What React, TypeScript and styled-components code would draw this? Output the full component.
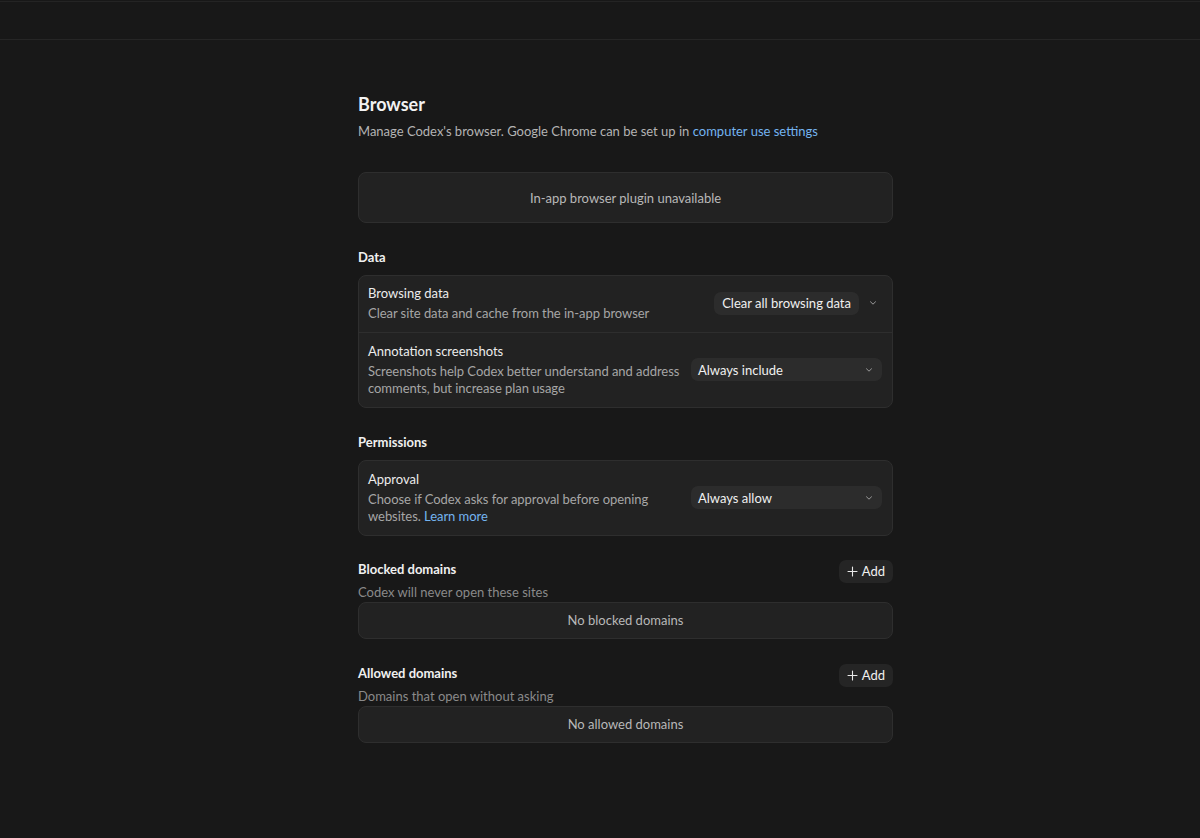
import React from "react";
import styled, { createGlobalStyle } from "styled-components";

const Global = createGlobalStyle`
  html, body { margin: 0; padding: 0; background: #181818; }
  body { font-family: "Segoe UI", Lato, "Open Sans", sans-serif; color: #e8e8e8; }
  * { box-sizing: border-box; }
`;

const Page = styled.div`
  min-height: 838px;
  background: #181818;
  display: flex;
  flex-direction: column;
`;

const TopBar = styled.div`
  height: 39px;
  margin-top: 1px;
  border-top: 1px solid #242424;
  border-bottom: 1px solid #262626;
`;

const Body = styled.div`
  display: flex;
  justify-content: center;
  padding-left: 51px;
`;

const Column = styled.main`
  width: 535px;
  padding-top: 52px;
  display: flex;
  flex-direction: column;
`;

const Title = styled.h1`
  margin: 0;
  font-size: 18px;
  font-weight: 700;
  line-height: 24px;
  color: #f2f2f2;
`;

const Subtitle = styled.p`
  margin: 6px 0 0;
  font-size: 13px;
  line-height: 18px;
  color: #b4b4b4;
`;

const Link = styled.a`
  color: #74b4f0;
  text-decoration: none;
`;

const Notice = styled.div<{ $h: number }>`
  height: ${(p) => p.$h}px;
  border: 1px solid #2e2e2e;
  border-radius: 8px;
  background: #222222;
  display: flex;
  align-items: center;
  justify-content: center;
  font-size: 13px;
  color: #b8b8b8;
`;

const Section = styled.section<{ $top: number }>`
  margin-top: ${(p) => p.$top}px;
  display: flex;
  flex-direction: column;
`;

const SectionTitle = styled.h2`
  margin: 0 0 9px;
  font-size: 13px;
  font-weight: 700;
  line-height: 18px;
  color: #f0f0f0;
`;

const Card = styled.div`
  border: 1px solid #2e2e2e;
  border-radius: 8px;
  background: #222222;
  display: flex;
  flex-direction: column;
`;

const Row = styled.div<{ $tight?: boolean }>`
  display: flex;
  align-items: center;
  justify-content: space-between;
  gap: 8px;
  padding: ${(p) => (p.$tight ? "8px" : "9px")} 10px 9px 9px;
  & + & { border-top: 1px solid #2e2e2e; }
`;

const RowText = styled.div`
  flex: 1;
  min-width: 0;
  display: flex;
  flex-direction: column;
  gap: 3px;
`;

const RowLabel = styled.div`
  font-size: 13px;
  line-height: 18px;
  color: #ececec;
`;

const RowDesc = styled.div`
  font-size: 13px;
  line-height: 17.5px;
  letter-spacing: -0.05px;
  color: #a6a6a6;
`;

const ActionWrap = styled.div`
  display: flex;
  align-items: center;
  gap: 9px;
  margin-right: 4px;
  flex-shrink: 0;
`;

const Pill = styled.button`
  height: 23px;
  padding: 0 8px;
  border: none;
  border-radius: 7px;
  background: #2c2c2c;
  color: #f0f0f0;
  font: inherit;
  font-size: 13px;
  display: flex;
  align-items: center;
`;

const Select = styled.button`
  flex-shrink: 0;
  width: 191px;
  height: 23px;
  padding: 0 8px 0 7px;
  border: none;
  border-radius: 7px;
  background: #2c2c2c;
  color: #f0f0f0;
  font: inherit;
  font-size: 13px;
  display: flex;
  align-items: center;
  justify-content: space-between;
`;

const Chevron = () => (
  <svg width="10" height="10" viewBox="0 0 10 10" fill="none">
    <path d="M2.5 3.8 L5 6.2 L7.5 3.8" stroke="#9a9a9a" strokeWidth="1" strokeLinecap="round" strokeLinejoin="round" />
  </svg>
);

const HeaderRow = styled.div`
  display: flex;
  align-items: flex-start;
  justify-content: space-between;
`;

const HeaderTitle = styled.h2`
  margin: 0;
  font-size: 13px;
  font-weight: 700;
  line-height: 18px;
  color: #f0f0f0;
`;

const AddButton = styled.button`
  height: 23px;
  padding: 0 8px 0 8px;
  border: none;
  border-radius: 7px;
  background: #252525;
  color: #f0f0f0;
  font: inherit;
  font-size: 13px;
  display: flex;
  align-items: center;
  gap: 4px;
`;

const MutedSub = styled.div`
  margin: 0 0 1px;
  font-size: 13px;
  line-height: 18px;
  color: #8a8a8a;
`;

const Plus = () => (
  <svg width="11" height="11" viewBox="0 0 11 11" fill="none">
    <path d="M5.5 1v9M1 5.5h9" stroke="#e8e8e8" strokeWidth="1.1" strokeLinecap="round" />
  </svg>
);

const DomainList = ({ title, sub, empty, top }: { title: string; sub: string; empty: string; top: number }) => (
  <Section $top={top}>
    <HeaderRow>
      <HeaderTitle>{title}</HeaderTitle>
      <AddButton>
        <Plus />
        Add
      </AddButton>
    </HeaderRow>
    <MutedSub>{sub}</MutedSub>
    <Notice $h={37}>{empty}</Notice>
  </Section>
);

export default function App() {
  return (
    <Page>
      <Global />
      <TopBar />
      <Body>
        <Column>
          <Title>Browser</Title>
          <Subtitle>
            Manage Codex's browser. Google Chrome can be set up in <Link>computer use settings</Link>
          </Subtitle>
          <Section $top={32}>
            <Notice $h={51}>In-app browser plugin unavailable</Notice>
          </Section>
          <Section $top={25}>
            <SectionTitle>Data</SectionTitle>
            <Card>
              <Row $tight>
                <RowText>
                  <RowLabel>Browsing data</RowLabel>
                  <RowDesc>Clear site data and cache from the in-app browser</RowDesc>
                </RowText>
                <ActionWrap>
                  <Pill>Clear all browsing data</Pill>
                  <Chevron />
                </ActionWrap>
              </Row>
              <Row>
                <RowText>
                  <RowLabel>Annotation screenshots</RowLabel>
                  <RowDesc>Screenshots help Codex better understand and address comments, but increase plan usage</RowDesc>
                </RowText>
                <Select>
                  Always include
                  <Chevron />
                </Select>
              </Row>
            </Card>
          </Section>
          <Section $top={25}>
            <SectionTitle>Permissions</SectionTitle>
            <Card>
              <Row>
                <RowText>
                  <RowLabel>Approval</RowLabel>
                  <RowDesc>
                    Choose if Codex asks for approval before opening websites. <Link>Learn more</Link>
                  </RowDesc>
                </RowText>
                <Select>
                  Always allow
                  <Chevron />
                </Select>
              </Row>
            </Card>
          </Section>
          <DomainList top={24} title="Blocked domains" sub="Codex will never open these sites" empty="No blocked domains" />
          <DomainList top={25} title="Allowed domains" sub="Domains that open without asking" empty="No allowed domains" />
        </Column>
      </Body>
    </Page>
  );
}
